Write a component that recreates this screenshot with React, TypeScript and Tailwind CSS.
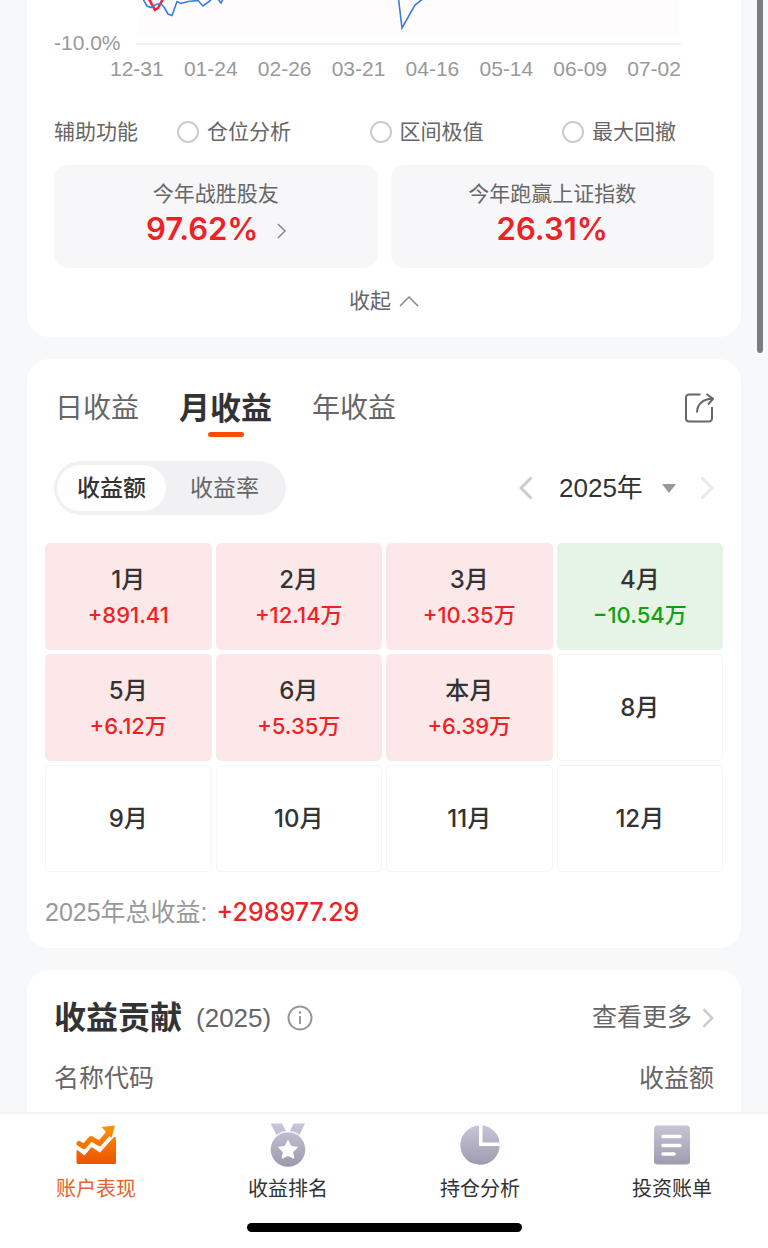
import { useState } from "react";

const dates = [
  "12-31",
  "01-24",
  "02-26",
  "03-21",
  "04-16",
  "05-14",
  "06-09",
  "07-02",
];

const helpers = ["仓位分析", "区间极值", "最大回撤"];

const periods = ["日收益", "月收益", "年收益"];

interface MonthItem {
  label: string;
  value?: string;
}

const months: MonthItem[] = [
  { label: "1月", value: "+891.41" },
  { label: "2月", value: "+12.14万" },
  { label: "3月", value: "+10.35万" },
  { label: "4月", value: "−10.54万" },
  { label: "5月", value: "+6.12万" },
  { label: "6月", value: "+5.35万" },
  { label: "本月", value: "+6.39万" },
  { label: "8月" },
  { label: "9月" },
  { label: "10月" },
  { label: "11月" },
  { label: "12月" },
];

const Chevron = ({ className, d }: { className: string; d: string }) => (
  <svg viewBox="0 0 14 24" fill="none" className={className} aria-hidden="true">
    <path d={d} stroke="currentColor" strokeWidth="3" />
  </svg>
);

const LEFT = "M12.5 1.5 2 12l10.5 10.5";
const RIGHT = "M1.5 1.5 12 12 1.5 22.5";

const ReturnChart = () => (
  <section className="rounded-b-[22px] bg-white px-[27px] pb-[21px]">
    <div className="flex items-start font-['Liberation_Sans',sans-serif] text-[21px] leading-[22px] text-[#999]">
      <span className="mt-8 w-[82px]">-10.0%</span>
      <svg
        viewBox="136 0 545 45"
        preserveAspectRatio="none"
        fill="none"
        className="mr-[33px] h-[45px] min-w-0 flex-1"
        aria-hidden="true"
      >
        <rect x="138" y="0" width="541" height="36" fill="#fefcfd" />
        <path d="M136 44h545" stroke="#f3f3f4" strokeWidth="2" />
        <path
          d="M149-1 155 10 158 8 163-1"
          stroke="#f5222d"
          strokeWidth="2.5"
        />
        <path
          d="M143-1 147 6l4 1.500 6-3.500h4l3 3 4 7 4 1.500 5-14 4 2 7-2 10-1 5 5.500 8-6M218-1l3 4 2-4M398.500-1 402 28 415 5l7-5.500"
          stroke="#3b7ddd"
          strokeWidth="1.600"
        />
      </svg>
    </div>
    <div className="mt-1 mr-[33px] ml-14 flex justify-between font-['Liberation_Sans',sans-serif] text-[21px] leading-[22px] text-[#999]">
      {dates.map((date) => (
        <span key={date}>{date}</span>
      ))}
    </div>

    <fieldset className="mt-9 flex h-8 items-center text-[21px] text-[#666]">
      <span className="mr-[39px]">辅助功能</span>
      <div className="flex flex-1 justify-between pr-[38px]">
        {helpers.map((name) => (
          <label key={name} className="flex items-center gap-2">
            <input
              type="radio"
              name="helper"
              className="size-[22px] appearance-none rounded-full border-2 border-[#ccc] bg-white checked:border-[#ff4d00]"
            />
            {name}
          </label>
        ))}
      </div>
    </fieldset>

    <div className="mt-[17px] grid grid-cols-2 gap-[13px] text-center">
      <a
        href="#rank"
        className="flex h-[103px] flex-col items-center rounded-[14px] bg-[#f7f7fa] pt-[14px]"
      >
        <span className="text-[21px] leading-[30px] text-[#666]">
          今年战胜股友
        </span>
        <span className="flex items-center gap-[18px] text-[31px] leading-[40px] font-semibold text-[#ee2224]">
          97.62%
          <svg
            viewBox="0 0 9 16"
            fill="none"
            className="mt-1 h-4 w-[9px] text-[#888]"
            aria-hidden="true"
          >
            <path
              d="M1 1l7 7-7 7"
              stroke="currentColor"
              strokeWidth="1.500"
            />
          </svg>
        </span>
      </a>
      <div className="flex h-[103px] flex-col items-center rounded-[14px] bg-[#f7f7fa] pt-[14px]">
        <span className="text-[21px] leading-[30px] text-[#666]">
          今年跑赢上证指数
        </span>
        <span className="text-[31px] leading-[40px] font-semibold text-[#ee2224]">
          26.31%
        </span>
      </div>
    </div>

    <button
      type="button"
      className="mx-auto mt-[18px] flex h-[30px] items-center gap-2 text-[21px] text-[#666]"
    >
      收起
      <svg
        viewBox="0 0 20 12"
        fill="none"
        className="h-3 w-5"
        aria-hidden="true"
      >
        <path d="M1 11l9-9 9 9" stroke="#888" strokeWidth="1.500" />
      </svg>
    </button>
  </section>
);

const MonthCell = ({ label, value }: MonthItem) => {
  const loss = value?.startsWith("−");
  const tone = !value
    ? "border border-[#f5f5f6] bg-white"
    : loss
      ? "bg-[#e5f4e5]"
      : "bg-[#fde8e9]";

  return (
    <button
      type="button"
      className={`flex h-[107px] flex-col items-center justify-center rounded-[5px] font-medium ${tone}`}
    >
      <span className="text-[24px] leading-[36px] text-[#333]">{label}</span>
      {value && (
        <span
          className={`text-[22px] leading-[34px] ${loss ? "text-[#11a011]" : "text-[#ee2224]"}`}
        >
          {value}
        </span>
      )}
    </button>
  );
};

const ReturnCalendar = () => {
  const [period, setPeriod] = useState("月收益");
  const [mode, setMode] = useState("收益额");

  return (
    <section className="mt-[22px] rounded-[22px] bg-white px-[18px] pt-[26px] pb-[18px]">
      {/* Tabs */}
      <div className="flex items-center justify-between px-[9px]">
        <div className="flex items-center gap-10 pl-px">
          {periods.map((name) => (
            <button
              key={name}
              type="button"
              onClick={() => setPeriod(name)}
              className={
                name === period
                  ? "relative h-[46px] text-[31px] font-bold text-[#333]"
                  : "h-[46px] text-[28px] text-[#666]"
              }
            >
              {name}
              {name === period && (
                <span className="absolute -bottom-1.5 left-1/2 h-[5px] w-9 -translate-x-1/2 rounded-full bg-[#ff4d00]" />
              )}
            </button>
          ))}
        </div>
        <button type="button" aria-label="分享" className="text-[#666]">
          <svg viewBox="0 0 30 30" fill="none" className="size-[30px]">
            <path
              d="M16.500 1.500H5A3 3 0 0 0 2 4.500v21A3 3 0 0 0 5 28.500h20a3 3 0 0 0 3-3V14"
              stroke="currentColor"
              strokeWidth="2"
            />
            <path
              d="M13 19.500C13 11.500 18.500 5.800 29 5.800M22.500 1l6.500 4.800-5 5.700"
              stroke="currentColor"
              strokeWidth="2"
            />
          </svg>
        </button>
      </div>

      {/* Mode and year */}
      <div className="mt-[30px] flex items-center justify-between px-[9px]">
        <div className="flex h-[54px] items-center rounded-full bg-[#f1f1f4] p-[3px]">
          {["收益额", "收益率"].map((name) => (
            <button
              key={name}
              type="button"
              onClick={() => setMode(name)}
              className={
                name === mode
                  ? "h-[46px] rounded-full bg-white px-5 text-[23px] font-medium text-[#333]"
                  : "h-[46px] rounded-full px-6 text-[23px] text-[#666]"
              }
            >
              {name}
            </button>
          ))}
        </div>
        <div className="flex items-center">
          <button type="button" aria-label="上一年" className="text-[#ccc]">
            <Chevron d={LEFT} className="h-6 w-[14px]" />
          </button>
          <label className="relative mr-6 ml-[26px] flex items-center">
            <select
              aria-label="年份"
              className="appearance-none bg-transparent pr-[33px] font-['Liberation_Sans','Noto_Sans_CJK_SC',sans-serif] text-[26px] text-[#333]"
            >
              <option>2025年</option>
            </select>
            <svg
              viewBox="0 0 14 9"
              className="pointer-events-none absolute right-0 h-[9px] w-[14px]"
              aria-hidden="true"
            >
              <path d="M0 0h14L7 9z" fill="#999" />
            </svg>
          </label>
          <button type="button" aria-label="下一年" className="text-[#e8e8e8]">
            <Chevron d={RIGHT} className="h-6 w-[14px]" />
          </button>
        </div>
      </div>

      {/* Months */}
      <div className="mt-7 grid grid-cols-4 gap-1">
        {months.map((month) => (
          <MonthCell key={month.label} {...month} />
        ))}
      </div>

      <p className="mt-[22px] flex items-center gap-[9px] leading-[36px]">
        <span className="font-['Liberation_Sans','Noto_Sans_CJK_SC',sans-serif] text-[25px] text-[#999]">
          2025年总收益:
        </span>
        <span className="text-[25px] font-medium text-[#ee2224]">
          +298977.29
        </span>
      </p>
    </section>
  );
};

const Contribution = () => (
  <section className="mt-[22px] flex-1 rounded-t-[22px] bg-white px-[27px] pt-[25px]">
    <div className="flex h-[46px] items-center">
      <h2 className="text-[32px] font-bold text-[#333]">收益贡献</h2>
      <span className="ml-[14px] font-['Liberation_Sans',sans-serif] text-[26px] text-[#666]">
        (2025)
      </span>
      <button type="button" aria-label="说明" className="ml-4">
        <svg viewBox="0 0 26 26" fill="none" className="size-[26px]">
          <circle cx="13" cy="13" r="11.500" stroke="#999" strokeWidth="2" />
          <path d="M13 11v8" stroke="#999" strokeWidth="2" />
          <circle cx="13" cy="7.500" r="1.300" fill="#999" />
        </svg>
      </button>
      <a
        href="#more"
        className="ml-auto flex items-center gap-[10px] text-[25px] text-[#666]"
      >
        查看更多
        <Chevron d={RIGHT} className="h-5 w-3 text-[#ccc]" />
      </a>
    </div>
    <table className="mt-[17px] w-full text-[25px] leading-[40px] text-[#666]">
      <thead>
        <tr>
          <th className="text-left font-normal">名称代码</th>
          <th className="text-right font-normal">收益额</th>
        </tr>
      </thead>
    </table>
  </section>
);

const PerformanceIcon = () => (
  <svg viewBox="0 0 44 44" className="size-11" aria-hidden="true">
    <defs>
      <linearGradient
        id="orange"
        x1="0"
        y1="2"
        x2="0"
        y2="41"
        gradientUnits="userSpaceOnUse"
      >
        <stop stopColor="#ff9500" />
        <stop offset="1" stopColor="#ec5200" />
      </linearGradient>
    </defs>
    <path
      d="M2.500 27.500Q3 26.500 4 27.500L10.500 32.500 17.500 24 26 29.500 39.500 14.500Q42 13 42 15.500V39.500Q42 41 40.500 41H4Q2.500 41 2.500 39.500z"
      fill="url(#orange)"
    />
    <path
      d="M5 20.500 10 23.500 17 15.500 25.500 20.500 35 9.500"
      stroke="url(#orange)"
      strokeWidth="5"
      strokeLinecap="round"
      strokeLinejoin="round"
      fill="none"
    />
    <path d="M27.500 4 41 2.500 37.500 15z" fill="url(#orange)" />
  </svg>
);

const GreyGradient = ({ id }: { id: string }) => (
  <defs>
    <linearGradient
      id={id}
      x1="0"
      y1="0"
      x2="0"
      y2="44"
      gradientUnits="userSpaceOnUse"
    >
      <stop stopColor="#c9c7d9" />
      <stop offset="1" stopColor="#9b99ab" />
    </linearGradient>
  </defs>
);

const MedalIcon = () => (
  <svg viewBox="0 0 44 44" className="size-11" aria-hidden="true">
    <GreyGradient id="medal" />
    <path
      d="M4.500.500H16l4 7.500Q14.500 8.500 10.500 12zM27.500.500H39L33.500 12Q29.500 8.500 24 8z"
      fill="url(#medal)"
    />
    <circle cx="22" cy="26.500" r="17.300" fill="url(#medal)" />
    <path
      d="M22 18l2.700 5.600 6.100.900-4.400 4.300 1 6.100L22 32l-5.400 2.900 1-6.100-4.400-4.300 6.100-.900z"
      fill="#fff"
      stroke="#fff"
      strokeWidth="1.600"
      strokeLinejoin="round"
    />
  </svg>
);

const PieIcon = () => (
  <svg viewBox="0 0 44 44" className="size-11" aria-hidden="true">
    <GreyGradient id="pie" />
    <path d="M21 2.500V23H41.700A19.700 19.700 0 1 1 21 2.500z" fill="url(#pie)" />
    <path d="M24.500 2.500A19.500 19.500 0 0 1 41.700 19.500H24.500z" fill="url(#pie)" />
  </svg>
);

const BillIcon = () => (
  <svg viewBox="0 0 44 44" className="size-11" aria-hidden="true">
    <GreyGradient id="bill" />
    <rect x="4" y="2.500" width="36" height="39" rx="3.500" fill="url(#bill)" />
    <path
      d="M13 13.500h17M13 22.500h17M13 31h11"
      stroke="#fff"
      strokeWidth="3.600"
      strokeLinecap="round"
    />
  </svg>
);

const navItems = [
  { label: "账户表现", Icon: PerformanceIcon, active: true },
  { label: "收益排名", Icon: MedalIcon, active: false },
  { label: "持仓分析", Icon: PieIcon, active: false },
  { label: "投资账单", Icon: BillIcon, active: false },
];

const App = () => {
  return (
    <div className="relative flex min-h-screen flex-col bg-[#f7f8fa] font-[Inter,'Noto_Sans_CJK_SC',sans-serif]">
      <main className="flex flex-1 flex-col px-[27px]">
        <ReturnChart />
        <ReturnCalendar />
        <Contribution />
      </main>

      {/* Scroll indicator */}
      <div className="absolute top-0 right-[5px] h-[353px] w-[6px] rounded-b-full bg-[#7d7d80]" />

      <nav className="border-t-2 border-[#f3f3f5] bg-white pt-[9px] pb-4">
        <div className="grid grid-cols-4">
          {navItems.map(({ label, Icon, active }) => (
            <a
              key={label}
              href="#nav"
              className={`flex flex-col items-center text-[20px] ${active ? "text-[#e8622a]" : "text-[#333]"}`}
            >
              <Icon />
              <span className="mt-[7px] leading-[30px]">{label}</span>
            </a>
          ))}
        </div>
        <div className="mx-auto mt-[19px] h-[9px] w-[275px] rounded-full bg-black" />
      </nav>
    </div>
  );
};

export default App;
